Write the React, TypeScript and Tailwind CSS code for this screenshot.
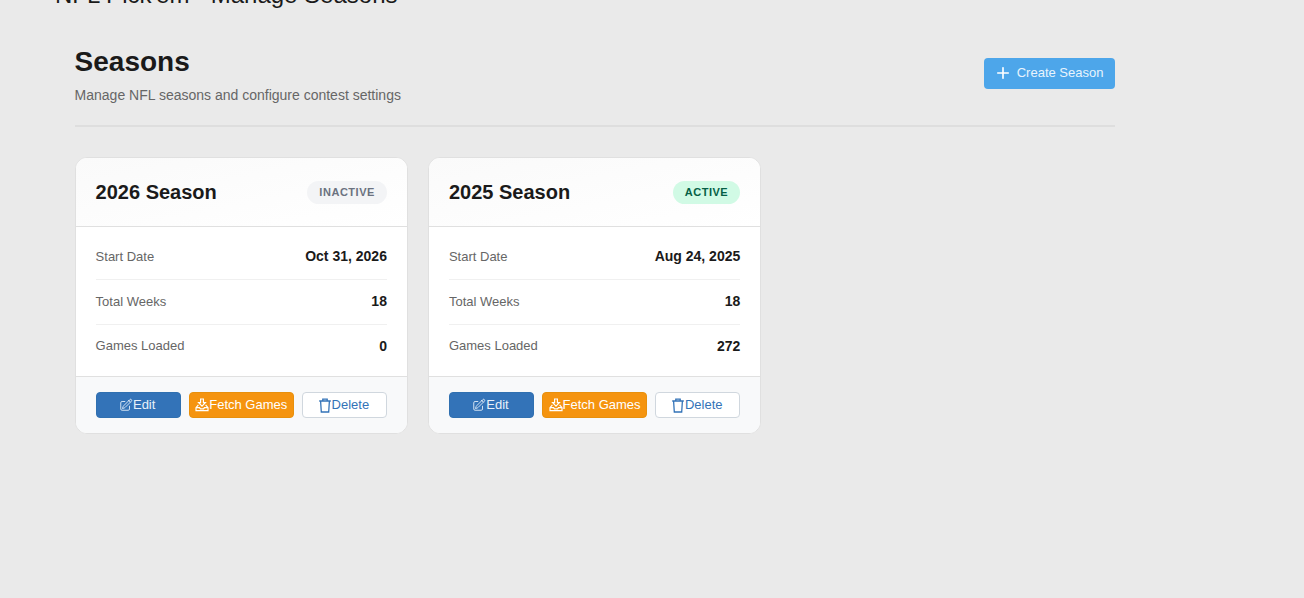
import React from "react";
import { HiOutlinePencilSquare } from "react-icons/hi2";
import { Plus } from "lucide-react";

const FetchIcon = () => (
  <svg width="14" height="14" viewBox="0 0 14 14" fill="none" stroke="currentColor" strokeWidth="1.2">
    <path d="M5.6 1h2.8v3.6h2L7 8.2 3.6 4.6h2z" />
    <path d="M3.4 6.8 1 9.6v3h12v-3l-2.4-2.8M1 9.6h3.6l.8 1.3h3.2l.8-1.3H13" />
  </svg>
);

const TrashIcon = () => (
  <svg width="14" height="15" viewBox="0 0 14 15" fill="none" stroke="currentColor" strokeWidth="1.3">
    <path d="M1.2 3h11.6M4.8 3V1.2h4.4V3M2.6 3l.7 11h7.4l.7-11" />
  </svg>
);

function Row({ label, value, last }: { label: string; value: string; last?: boolean }) {
  return (
    <div
      className={`flex items-center justify-between ${
        last ? "h-[44px] pb-[2px]" : "h-[45px] border-b border-[#f0f0f0] pb-[1.2px]"
      }`}
    >
      <span className="text-[13px] text-[#666666]">{label}</span>
      <span className="text-sm font-semibold text-[#1a1a1a]">{value}</span>
    </div>
  );
}

function Card({
  title,
  active,
  start,
  games,
}: {
  title: string;
  active: boolean;
  start: string;
  games: string;
}) {
  return (
    <div className="overflow-hidden rounded-xl border border-[#e0e0e0] bg-white">
      <div className="flex h-[69px] items-center justify-between border-b border-[#e0e0e0] bg-gradient-to-br from-[#fafafa] to-white px-5">
        <h3 className="text-xl font-bold text-[#1a1a1a]">{title}</h3>
        <span
          className={`rounded-full px-3 py-[5px] text-[11px] leading-[13px] font-bold tracking-[0.53px] ${
            active ? "bg-[#d1fae5] text-[#065f46]" : "bg-[#f3f4f6] text-[#6b7280]"
          }`}
        >
          {active ? "ACTIVE" : "INACTIVE"}
        </span>
      </div>
      <div className="h-[149px] px-5 pt-[8px]">
        <Row label="Start Date" value={start} />
        <Row label="Total Weeks" value="18" />
        <Row label="Games Loaded" value={games} last />
      </div>
      <div className="flex gap-2 border-t border-[#e0e0e0] bg-[#f8f9fa] px-5 py-[15px]">
        <button className="flex h-[26px] min-w-0 flex-1 items-center justify-center rounded border border-[#3070b0] bg-[#3373b8] pr-[2px] text-[13px] text-[#e8f1fa]">
          <HiOutlinePencilSquare size={14} />
          Edit
        </button>
        <button className="flex h-[26px] w-[105px] flex-none items-center justify-center rounded border border-[#e8900c] bg-[#f5940f] text-[13px] text-white">
          <FetchIcon />
          Fetch Games
        </button>
        <button className="flex h-[26px] min-w-0 flex-1 items-center justify-center rounded border border-[#d0d7de] bg-white pr-[2px] text-[13px] text-[#3373b8]">
          <TrashIcon />
          Delete
        </button>
      </div>
    </div>
  );
}

export default function App() {
  return (
    <div className="h-[598px] overflow-hidden bg-[#eaeaea] font-['Liberation_Sans',sans-serif]">
      <h1 className="-mt-[19px] ml-[55px] text-2xl leading-[28px] font-normal text-[#1a1a1a]">
        NFL Pick'em - Manage Seasons
      </h1>
      <main className="ml-[74.6px] w-[1040px]">
        <header className="mt-[32px] flex h-[86px] items-start justify-between border-b-2 border-[#dedede] pt-[5px]">
          <div>
            <h2 className="text-[28px] leading-[32px] font-bold text-[#1a1a1a]">Seasons</h2>
            <p className="mt-[9px] text-sm leading-4 text-[#666666]">Manage NFL seasons and configure contest settings</p>
          </div>
          <button className="mt-[12px] flex h-[31px] w-[131px] items-center justify-center gap-[5px] rounded bg-[#4da6ea] pr-[1px] pb-[2px] text-[13px] text-[#e8f4fd]">
            <Plus size={18} strokeWidth={2.2} className="text-white" />
            Create Season
          </button>
        </header>
        <div className="mt-[30px] grid grid-cols-3 gap-5">
          <Card title="2026 Season" active={false} start="Oct 31, 2026" games="0" />
          <Card title="2025 Season" active start="Aug 24, 2025" games="272" />
        </div>
      </main>
    </div>
  );
}
